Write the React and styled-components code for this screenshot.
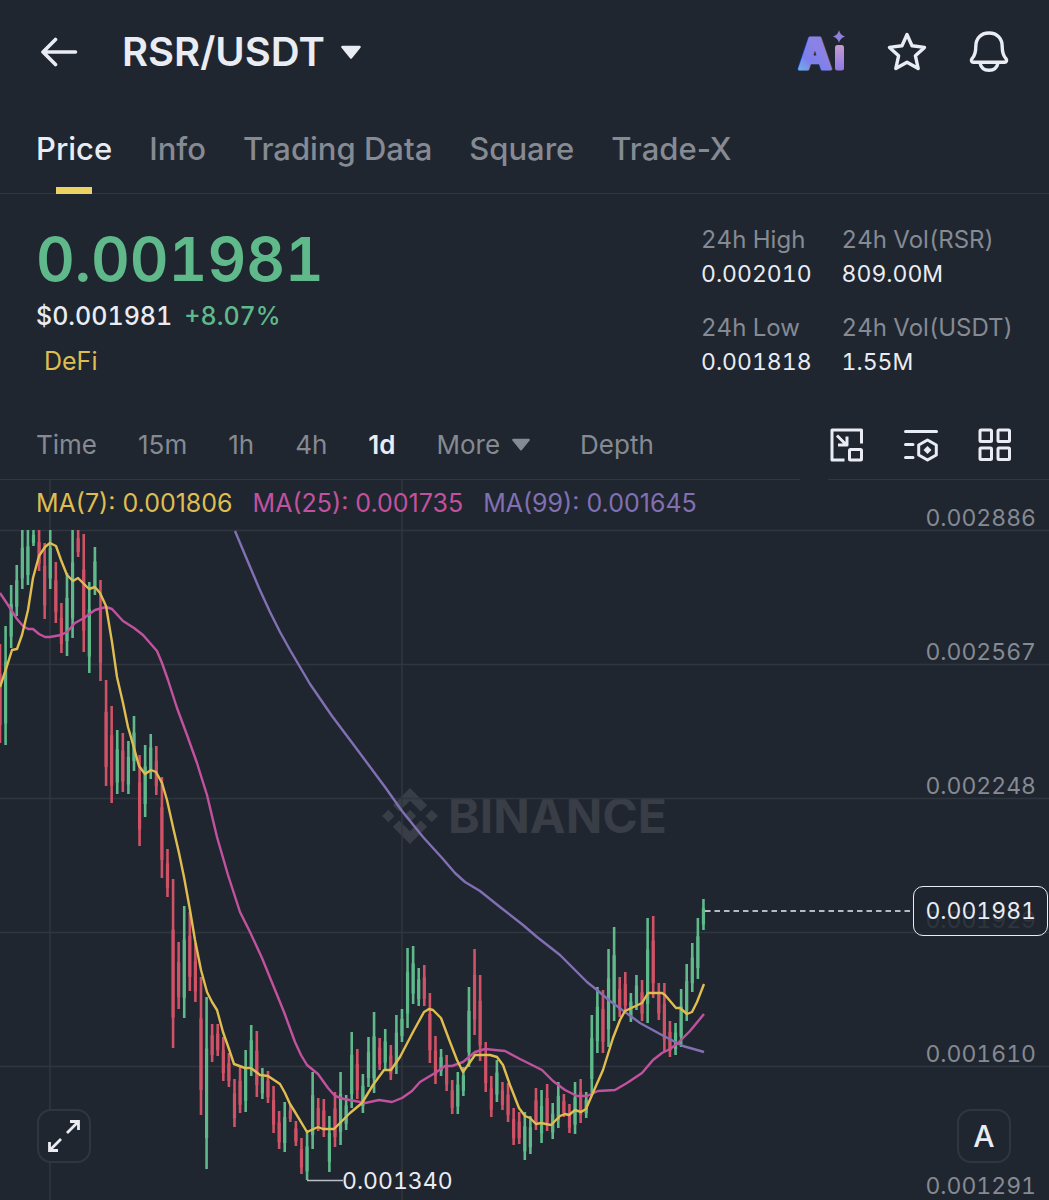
import styled, { createGlobalStyle } from "styled-components";
import { SiBinance } from "react-icons/si";

const colors = {
  bg: "#20262f",
  line: "#30363f",
  white: "#eaecf3",
  gray: "#858a93",
  green: "#5fb98b",
  red: "#cf5266",
  yellow: "#dfbd50",
  tab: "#ecd262",
  pink: "#c2529f",
  purple: "#8170b3",
  watermark: "#383d46",
};

const tabs = ["Price", "Info", "Trading Data", "Square", "Trade-X"];

const intervals = ["Time", "15m", "1h", "4h", "1d", "More", "Depth"];

const stats = [
  { label: "24h High", value: "0.002010" },
  { label: "24h Vol(RSR)", value: "809.00M" },
  { label: "24h Low", value: "0.001818" },
  { label: "24h Vol(USDT)", value: "1.55M" },
];

const averages = [
  { name: "MA(7)", value: "0.001806", color: colors.yellow },
  { name: "MA(25)", value: "0.001735", color: colors.pink },
  { name: "MA(99)", value: "0.001645", color: colors.purple },
];

// chart space: y runs from TOP to TOP + HEIGHT
const TOP = 480;
const WIDTH = 1049;
const HEIGHT = 720;
const STEP = 5.583;

const gridRows = [530, 664, 798, 932, 1066];
const gridCols = [50, 402];

const axis = [
  { price: "0.002886", y: 518 },
  { price: "0.002567", y: 652 },
  { price: "0.002248", y: 786 },
  { price: "0.001929", y: 920 },
  { price: "0.001610", y: 1054 },
  { price: "0.001291", y: 1186 },
];

// one entry per day: direction, high, low
const candles = `
r 644 743,g 626 745,g 585 648,g 565 616,g 530 589,g 530 585,g 530 546,r 530 571,
r 543 619,g 530 589,r 562 623,r 603 653,g 573 656,g 530 638,r 530 557,r 534 652,
g 582 673,g 547 595,r 580 681,r 680 786,r 706 803,g 730 794,r 733 792,g 741 794,
g 716 771,r 755 846,g 745 817,g 734 779,r 746 795,r 777 878,r 849 897,r 879 1048,
r 942 1009,g 906 1018,r 912 991,r 943 1002,r 977 1115,g 997 1169,r 1024 1062,r 1024 1056,
r 1037 1081,r 1053 1087,r 1079 1127,r 1067 1113,g 1050 1112,g 1025 1076,r 1031 1097,g 1068 1099,
r 1071 1103,r 1086 1133,r 1111 1149,g 1102 1152,r 1105 1122,r 1121 1146,r 1138 1174,g 1132 1180,
g 1072 1149,r 1098 1131,r 1099 1137,g 1116 1172,r 1092 1147,g 1072 1145,g 1095 1130,g 1032 1108,
r 1049 1099,g 1074 1113,g 1037 1087,g 1012 1093,r 1038 1070,g 1029 1070,r 1045 1080,g 1015 1074,
g 1009 1042,g 948 1028,g 946 1004,g 968 1006,r 965 1006,r 993 1063,r 1036 1084,g 1049 1076,
r 1055 1091,r 1080 1114,g 1072 1114,g 1067 1096,g 987 1067,r 949 1035,r 975 1061,r 1042 1092,
r 1076 1117,g 1060 1102,r 1082 1110,r 1083 1122,r 1108 1145,r 1112 1144,g 1112 1160,g 1116 1154,
r 1088 1130,g 1090 1143,r 1084 1131,g 1103 1139,g 1082 1128,r 1094 1117,r 1104 1133,g 1082 1134,
r 1079 1123,g 1092 1118,g 1015 1093,g 987 1053,r 990 1053,g 949 1047,g 927 1021,r 977 1017,
r 972 1013,g 993 1022,g 975 1010,r 980 1021,g 918 1023,r 916 998,r 983 1020,r 983 1052,
r 1021 1057,g 1023 1055,g 989 1047,g 964 1021,g 943 992,g 918 979,g 899 930`
  .split(",")
  .map((item) => {
    const [dir, high, low] = item.trim().split(" ");
    return { up: dir === "g", high: Number(high), low: Number(low) };
  });

const lines = [
  {
    color: colors.purple,
    points:
      "235,531 248,562 259,588 270,612 280,632 290,650 310,684 332,716 356,748 385,787 402,811 423,837 443,859 455,873 465,882 480,891 500,907 523,925 537,937 560,955 577,972 587,982 597,990 610,1001 625,1012 640,1023 660,1034 683,1046 704,1052",
  },
  {
    color: colors.pink,
    points:
      "0,593 8,605 17,619 23,626 28,629 33,629 39,634 45,637 50,637 61,635 67,632 75,623 84,618 95,610 106,607 112,609 123,621 134,628 143,635 150,643 157,651 162,663 168,680 177,708 187,735 197,763 201,776 207,795 217,837 228,875 240,912 250,932 262,958 273,985 284,1012 295,1042 301,1055 307,1065 318,1074 328,1088 335,1096 344,1099 355,1101 365,1103 379,1100 392,1102 402,1098 412,1091 420,1082 435,1073 445,1066 452,1066 463,1062 475,1052 485,1049 505,1051 520,1059 542,1070 553,1081 565,1090 577,1096 587,1096 598,1091 615,1090 627,1083 642,1073 653,1060 662,1053 670,1049 678,1043 690,1031 704,1014",
  },
  {
    color: colors.yellow,
    points:
      "0,687 6,669 12,650 17,649 22,635 28,610 33,578 39,556 45,547 50,543 56,546 61,560 67,575 73,581 78,578 84,584 89,589 95,587 100,593 106,606 112,642 117,677 123,703 128,727 134,748 139,766 145,774 151,770 156,772 162,783 167,800 173,827 179,853 184,877 190,910 195,940 201,970 207,992 212,1002 217,1010 223,1032 229,1049 234,1064 245,1068 251,1068 260,1075 268,1076 280,1084 285,1093 290,1104 295,1112 307,1132 318,1127 323,1129 334,1129 340,1123 350,1113 362,1103 373,1085 384,1070 391,1070 400,1057 413,1032 424,1012 429,1009 433,1010 441,1018 450,1042 457,1060 463,1072 468,1065 475,1055 490,1055 497,1057 503,1065 510,1085 519,1108 525,1116 530,1118 536,1124 541,1123 551,1125 560,1116 565,1114 569,1115 575,1110 581,1112 586,1109 592,1095 603,1070 613,1038 620,1020 625,1011 642,1003 648,993 662,993 665,995 676,1008 680,1008 687,1014 692,1012 697,1002 704,984",
  },
];

const toTop = (y) => `${((y - TOP) / HEIGHT) * 100}%`;
const toLeft = (x) => `${(x / WIDTH) * 100}%`;

const Caret = ({ size }) => (
  <svg width={size} height={size * 0.66} viewBox="0 0 22 14.5" aria-hidden="true">
    <path
      d="M2.5 2H19.5L11 12.5Z"
      fill="currentColor"
      stroke="currentColor"
      strokeWidth="2.5"
      strokeLinejoin="round"
    />
  </svg>
);

const BackIcon = () => (
  <svg width="38" height="30" viewBox="0 0 38 30" aria-hidden="true">
    <path
      d="M35.5 15H3M15.5 2.5L3 15L15.5 27.5"
      fill="none"
      stroke="currentColor"
      strokeWidth="3.6"
      strokeLinecap="round"
      strokeLinejoin="round"
    />
  </svg>
);

const AiIcon = () => (
  <svg width="48" height="42" viewBox="0 0 48 42" overflow="visible" aria-hidden="true">
    <defs>
      <linearGradient id="ai-a" gradientUnits="userSpaceOnUse" x1="2" y1="42" x2="22" y2="18">
        <stop offset="0" stopColor="#6db8e8" />
        <stop offset="0.5" stopColor="#7c7fee" />
        <stop offset="1" stopColor="#8b82e6" />
      </linearGradient>
      <linearGradient id="ai-i" x1="0" y1="1" x2="0" y2="0">
        <stop offset="0" stopColor="#8f79e6" />
        <stop offset="1" stopColor="#c79ad0" />
      </linearGradient>
    </defs>
    <text
      x="18"
      y="38"
      textAnchor="middle"
      fontFamily="Inter, sans-serif"
      fontSize="43"
      fontWeight="800"
      fill="url(#ai-a)"
      stroke="url(#ai-a)"
      strokeWidth="3"
      strokeLinejoin="round"
    >
      A
    </text>
    <rect x="38" y="14" width="9" height="25.5" rx="2.5" fill="url(#ai-i)" />
    <path d="M42 -1Q43 4 48 5.5Q43 7 42 12Q41 7 36 5.5Q41 4 42 -1Z" fill="#8d80da" />
  </svg>
);

const StarIcon = () => (
  <svg width="40" height="40" viewBox="0 0 40 40" aria-hidden="true">
    <path
      d="M20 2.5L25 13.8L37.5 15.4L28.4 23.8L31.2 36.5L20 30.3L8.8 36.5L11.6 23.8L2.5 15.4L15 13.8Z"
      fill="none"
      stroke="currentColor"
      strokeWidth="3.4"
      strokeLinejoin="round"
    />
  </svg>
);

const BellIcon = () => (
  <svg width="40" height="42" viewBox="0 0 40 42" aria-hidden="true">
    <g fill="none" stroke="currentColor" strokeWidth="3.4" strokeLinejoin="round">
      <path d="M20 2C11.5 2 6.8 8 6.8 15.5C6.8 21.5 6 24.5 3 27.7C1.8 29.3 2.5 31.3 4.5 31.3H35.5C37.5 31.3 38.2 29.3 37 27.7C34 24.5 33.2 21.5 33.2 15.5C33.2 8 28.5 2 20 2Z" />
      <path d="M11 32C12 37 15.5 39.3 20 39.3C24.5 39.3 28 37 29 32" />
    </g>
  </svg>
);

const PipIcon = () => (
  <svg width="34" height="34" viewBox="0 0 34 34" aria-hidden="true">
    <g fill="none" stroke="currentColor" strokeWidth="3" strokeLinejoin="round">
      <path d="M31.5 15.5V2H2V32H14.5" />
      <path d="M7 7.5L16 16.5M17 8.5V17H8" />
      <rect x="19.5" y="21.5" width="12" height="10.5" rx="1" />
    </g>
  </svg>
);

const IndicatorIcon = () => (
  <svg width="34" height="34" viewBox="0 0 34 34" aria-hidden="true">
    <path
      d="M1.5 3.5H32.5M1.5 16.5H9M1.5 29.5H9"
      stroke="currentColor"
      strokeWidth="3"
      strokeLinecap="round"
    />
    <path
      d="M23.5 12L32.3 17V27L23.5 32L14.7 27V17Z"
      fill="none"
      stroke="currentColor"
      strokeWidth="3"
      strokeLinejoin="round"
    />
    <path d="M23.5 18L27.5 22L23.5 26L19.5 22Z" fill="currentColor" />
  </svg>
);

const GridIcon = () => (
  <svg width="34" height="34" viewBox="0 0 34 34" aria-hidden="true">
    <g fill="none" stroke="currentColor" strokeWidth="3">
      <rect x="2" y="2" width="11.5" height="11.5" rx="1" />
      <rect x="20" y="2" width="11.5" height="11.5" rx="1" />
      <rect x="2" y="20" width="11.5" height="11.5" rx="1" />
      <rect x="20" y="20" width="11.5" height="11.5" rx="1" />
    </g>
  </svg>
);

const ExpandIcon = () => (
  <svg width="34" height="34" viewBox="0 0 34 34" aria-hidden="true">
    <g fill="none" stroke="currentColor" strokeWidth="2.8">
      <path d="M20 14L32 2M23 2.5H31.5V11" />
      <path d="M14 20L2 32M2.5 23V31.5H11" />
    </g>
  </svg>
);

const CandleChart = () => (
  <Plot viewBox={`0 ${TOP} ${WIDTH} ${HEIGHT}`} role="img" aria-label="RSR/USDT 1d">
    <g stroke={colors.line} strokeWidth="1.5">
      {gridRows.map((y) => (
        <line key={y} x1="0" x2={WIDTH} y1={y + 0.5} y2={y + 0.5} />
      ))}
      {gridCols.map((x) => (
        <line key={x} x1={x} x2={x} y1={TOP} y2={TOP + HEIGHT} />
      ))}
    </g>

    {candles.map(({ up, high, low }, i) => {
      const x = i * STEP;
      const size = low - high;
      return (
        <g key={i} stroke={up ? colors.green : colors.red}>
          <line x1={x} x2={x} y1={high} y2={low} strokeWidth="2.6" />
          <line x1={x} x2={x} y1={high + size * 0.3} y2={low - size * 0.18} strokeWidth="3.2" />
        </g>
      );
    })}

    {lines.map(({ color, points }) => (
      <polyline
        key={color}
        points={points}
        fill="none"
        stroke={color}
        strokeWidth="2.4"
        strokeLinejoin="round"
      />
    ))}

    <path d="M307 1180.5H343" stroke="#b9bfc8" strokeWidth="1.5" />
    <path d="M705 911H912" stroke={colors.white} strokeWidth="1.5" strokeDasharray="5.5 4" />
  </Plot>
);

export default function App() {
  return (
    <Page>
      <GlobalStyle />

      <Header>
        <IconButton aria-label="Back">
          <BackIcon />
        </IconButton>
        <PairButton>
          RSR/USDT
          <Caret size={22} />
        </PairButton>
        <HeaderActions>
          <IconButton aria-label="Ai">
            <AiIcon />
          </IconButton>
          <IconButton aria-label="Favorite">
            <StarIcon />
          </IconButton>
          <IconButton aria-label="Alerts">
            <BellIcon />
          </IconButton>
        </HeaderActions>
      </Header>

      <Tabs>
        {tabs.map((tab) => (
          <Tab key={tab} $active={tab === "Price"}>
            {tab}
          </Tab>
        ))}
      </Tabs>

      <Summary>
        <div>
          <LastPrice>0.001981</LastPrice>
          <FiatRow>
            $0.001981 <Change>+8.07%</Change>
          </FiatRow>
          <Tag href="#defi">DeFi</Tag>
        </div>
        <Stats>
          {stats.map(({ label, value }) => (
            <div key={label}>
              <StatLabel>{label}</StatLabel>
              <StatValue>{value}</StatValue>
            </div>
          ))}
        </Stats>
      </Summary>

      <Toolbar>
        <Intervals>
          {intervals.map((item) => (
            <Interval key={item} $active={item === "1d"} $menu={item === "More"}>
              {item}
              {item === "More" && <Caret size={20} />}
            </Interval>
          ))}
        </Intervals>
        <Tools>
          <IconButton aria-label="Floating window">
            <PipIcon />
          </IconButton>
          <IconButton aria-label="Indicators">
            <IndicatorIcon />
          </IconButton>
          <IconButton aria-label="Layout">
            <GridIcon />
          </IconButton>
        </Tools>
      </Toolbar>

      <Chart>
        <Watermark>
          <SiBinance size={56} />
          BINANCE
        </Watermark>
        <CandleChart />
        <Legend>
          {averages.map(({ name, value, color }) => (
            <Average key={name} $color={color}>
              {name}: {value}
            </Average>
          ))}
        </Legend>
        {axis.map(({ price, y }) => (
          <AxisLabel key={price} style={{ top: toTop(y) }}>
            {price}
          </AxisLabel>
        ))}
        <PriceTag style={{ top: toTop(911) }}>0.001981</PriceTag>
        <LowLabel style={{ top: toTop(1181), left: toLeft(342) }}>0.001340</LowLabel>
        <ExpandButton aria-label="Full screen">
          <ExpandIcon />
        </ExpandButton>
        <AutoButton>A</AutoButton>
      </Chart>
    </Page>
  );
}

const GlobalStyle = createGlobalStyle`
  body {
    margin: 0;
    background-color: ${colors.bg};
  }

  * {
    box-sizing: border-box;
  }

  button {
    padding: 0;
    border: none;
    background: none;
    color: inherit;
    font: inherit;
    cursor: pointer;
  }

  svg {
    display: block;
    flex-shrink: 0;
  }
`;

const Page = styled.div`
  color: ${colors.white};
  font-family: Inter, "Liberation Sans", sans-serif;
  font-size: 25px;
  line-height: 34px;
  white-space: nowrap;
  overflow: hidden;
`;

const Header = styled.header`
  display: flex;
  align-items: center;
  height: 104px;
  padding: 0 40px;
`;

const IconButton = styled.button`
  display: flex;
  align-items: center;
  justify-content: center;
`;

const PairButton = styled.button`
  display: flex;
  align-items: center;
  gap: 15px;
  margin-left: 44px;
  font-size: 40px;
  font-weight: 600;
`;

const HeaderActions = styled.div`
  display: flex;
  align-items: center;
  gap: 42px;
  margin-left: auto;
`;

const Tabs = styled.nav`
  display: flex;
  gap: 37px;
  height: 90px;
  padding: 0 36px;
  border-bottom: 1px solid ${colors.line};
`;

const Tab = styled.button`
  position: relative;
  font-size: 31px;
  font-weight: 500;
  color: ${({ $active }) => ($active ? colors.white : colors.gray)};

  &::after {
    content: "";
    display: ${({ $active }) => ($active ? "block" : "none")};
    position: absolute;
    bottom: -1px;
    left: 50%;
    width: 36px;
    height: 7px;
    margin-left: -18px;
    background-color: ${colors.tab};
  }
`;

const Summary = styled.section`
  display: flex;
  justify-content: space-between;
  height: 216px;
  padding: 29px 36px 0;
  font-variant-numeric: tabular-nums;
`;

const LastPrice = styled.div`
  font-size: 60px;
  line-height: 72px;
  font-weight: 600;
  color: ${colors.green};
`;

const FiatRow = styled.div`
  display: flex;
  gap: 12px;
  margin: 4px 0 11px;
  font-weight: 500;
`;

const Change = styled.span`
  color: ${colors.green};
`;

const Tag = styled.a`
  margin-left: 8px;
  color: ${colors.yellow};
  text-decoration: none;
`;

const Stats = styled.div`
  display: grid;
  grid-template-columns: auto auto;
  align-content: start;
  gap: 20px 30px;
`;

const StatLabel = styled.div`
  font-size: 24px;
  color: ${colors.gray};
`;

const StatValue = styled.div`
  font-size: 23px;
`;

const Toolbar = styled.div`
  display: flex;
  gap: 28px;
  height: 70px;
`;

const Intervals = styled.nav`
  display: flex;
  flex: 1;
  gap: 41px;
  padding-left: 36px;
  border-bottom: 1px solid ${colors.line};
`;

const Interval = styled.button`
  display: flex;
  align-items: center;
  gap: 11px;
  padding-right: ${({ $menu }) => ($menu ? "8px" : "0")};
  font-size: 26px;
  font-weight: ${({ $active }) => ($active ? 600 : 400)};
  color: ${({ $active }) => ($active ? colors.white : colors.gray)};
`;

const Tools = styled.div`
  display: flex;
  gap: 40px;
  padding: 0 37px 0 2px;
  border-bottom: 1px solid ${colors.line};
`;

const Chart = styled.section`
  position: relative;
`;

const Plot = styled.svg`
  position: relative;
  width: 100%;
  height: auto;
`;

const Watermark = styled.div`
  position: absolute;
  inset: 0 0 48px;
  display: flex;
  align-items: center;
  justify-content: center;
  gap: 10px;
  font-size: 48px;
  font-weight: 700;
  color: ${colors.watermark};
`;

const Legend = styled.div`
  position: absolute;
  top: 6px;
  left: 36px;
  display: flex;
  gap: 20px;
`;

const Average = styled.span`
  color: ${({ $color }) => $color};
`;

const ChartLabel = styled.div`
  position: absolute;
  transform: translateY(-50%);
  font-size: 23px;
  font-variant-numeric: tabular-nums;
`;

const AxisLabel = styled(ChartLabel)`
  right: 13px;
  color: ${colors.gray};
`;

const PriceTag = styled(ChartLabel)`
  right: 1px;
  padding: 7px 11px;
  border: 1px solid ${colors.white};
  border-radius: 10px;
  background-color: rgba(32, 38, 47, 0.85);
`;

const LowLabel = styled(ChartLabel)``;

const ChartButton = styled.button`
  position: absolute;
  bottom: 37px;
  display: flex;
  align-items: center;
  justify-content: center;
  width: 54px;
  height: 54px;
  border: 2px solid ${colors.line};
  border-radius: 14px;
  background-color: ${colors.bg};
`;

const ExpandButton = styled(ChartButton)`
  left: 37px;
`;

const AutoButton = styled(ChartButton)`
  right: 38px;
  font-size: 30px;
  font-weight: 500;
`;
